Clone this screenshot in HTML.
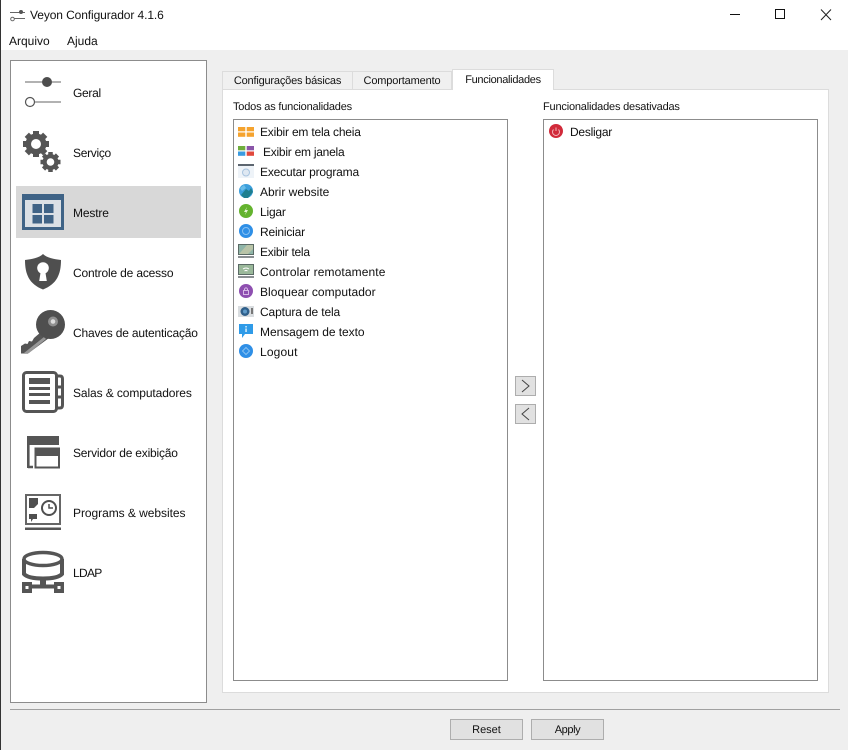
<!DOCTYPE html>
<html><head><meta charset="utf-8">
<style>
html,body{margin:0;padding:0;width:848px;height:750px;overflow:hidden;background:#efefef;}
body{position:relative;font-family:"Liberation Sans",sans-serif;font-size:12px;color:#111;text-rendering:geometricPrecision;}
.a{position:absolute;box-sizing:border-box;}
.t{position:absolute;white-space:nowrap;line-height:16px;height:16px;}
svg{position:absolute;overflow:visible;}
.tab{position:absolute;box-sizing:border-box;background:#f0f0f0;border:1px solid #dcdcdc;border-bottom:none;text-align:center;line-height:18px;top:71px;height:18px;font-size:11px;}
.s{font-size:11px;letter-spacing:-.19px;}
</style></head><body>
<div class="a" style="left:0;top:0;width:848px;height:50px;background:#fff"></div>
<div class="a" style="left:0;top:0;width:1px;height:750px;background:#333"></div>
<svg style="left:10px;top:9px" width="16" height="14" viewBox="0 0 16 14"><path d="M0 3.500H15M4 9.500H15" stroke="#666" stroke-width="1" fill="none"/><circle cx="11" cy="3" r="2" fill="#555"/><circle cx="2.500" cy="10" r="1.800" fill="#fff" stroke="#666"/></svg>
<div class="t" style="left:30px;top:7px;letter-spacing:-.1px">Veyon Configurador 4.1.6</div>
<div class="t" style="left:9px;top:33px">Arquivo</div>
<div class="t" style="left:67px;top:33px">Ajuda</div>
<svg style="left:730px;top:8px" width="100" height="14" viewBox="0 0 100 14"><path d="M0 6.500H10" stroke="#111" fill="none"/><rect x="45.500" y="1.500" width="9" height="9" fill="none" stroke="#111"/><path d="M91 1.500L101 12M101 1.500L91 12" stroke="#222" fill="none"/></svg>

<div class="a" style="left:10px;top:60px;width:197px;height:643px;background:#fff;border:1px solid #8c8c8c"></div>
<div class="a" style="left:16px;top:186px;width:185px;height:52px;background:#d8d8d8"></div>

<svg style="left:22px;top:72px" width="42" height="42" viewBox="0 0 42 42"><path d="M3 10H39M8 30H39" stroke="#666" stroke-width="1" fill="none"/><circle cx="25" cy="10" r="5" fill="#4d4d4d"/><circle cx="8" cy="30" r="4.500" fill="#fff" stroke="#555" stroke-width="1.200"/></svg>
<div class="t" style="left:73px;top:85px;letter-spacing:-.3px">Geral</div>

<svg style="left:22px;top:130px" width="42" height="44" viewBox="0 0 42 44">
<g fill="#555"><circle cx="14" cy="14" r="10.500"/><circle cx="28.500" cy="32" r="8"/>
<g stroke="#555" stroke-width="6"><path d="M14 1V27M1 14H27M4.800 4.800L23.200 23.200M23.200 4.800L4.800 23.200"/></g>
<g stroke="#555" stroke-width="4.500"><path d="M28.500 22V42M18.500 32H38.500M21.500 25L35.500 39M35.500 25L21.500 39"/></g></g>
<circle cx="14" cy="14" r="5" fill="#fff"/><circle cx="28.500" cy="32" r="3.800" fill="#fff"/></svg>
<div class="t" style="left:73px;top:145px;letter-spacing:-.3px">Serviço</div>

<svg style="left:22px;top:194px" width="42" height="36" viewBox="0 0 42 36"><rect width="42" height="36" fill="#3f6386"/><rect x="3" y="6" width="36" height="27" fill="#dbe0e5"/><g fill="#3f6386"><rect x="10.500" y="10" width="9.500" height="9"/><rect x="22" y="10" width="9.500" height="9"/><rect x="10.500" y="21" width="9.500" height="8.500"/><rect x="22" y="21" width="9.500" height="8.500"/></g></svg>
<div class="t" style="left:73px;top:205px;letter-spacing:-.15px">Mestre</div>

<svg style="left:25px;top:254px" width="36" height="36" viewBox="0 0 36 36"><path d="M18 0C14 4 7 5 0 6C0 20 4 30 18 35.500C32 30 36 20 36 6C29 5 22 4 18 0Z" fill="#4f4f4f"/><circle cx="18" cy="14" r="5.800" fill="#fff"/><path d="M15.800 17H20.200L21.800 27H14.200Z" fill="#fff"/></svg>
<div class="t" style="left:73px;top:265px;letter-spacing:-.17px">Controle de acesso</div>

<svg style="left:21px;top:310px" width="44" height="44" viewBox="0 0 44 44"><path d="M0 36L4 33.500L6.500 34L8 31L11 31.500L13 28L20 22L28 28L7 43.500H0Z" fill="#555"/><path d="M3 43L23 27L25 29L8 43Z" fill="#999"/><circle cx="29.500" cy="14.500" r="14.500" fill="#4f4f4f"/><circle cx="32" cy="11.500" r="5" fill="#8f8f8f"/><circle cx="32" cy="11.500" r="2.300" fill="#ddd"/></svg>
<div class="t" style="left:73px;top:325px;letter-spacing:-.18px">Chaves de autenticação</div>

<svg style="left:22px;top:371px" width="42" height="42" viewBox="0 0 42 42"><rect x="1.500" y="1.500" width="33" height="39" rx="3" fill="#fff" stroke="#555" stroke-width="3"/><path d="M34 5H38Q40.500 5 40.500 8V34Q40.500 37 38 37H34M34 16H40M34 26H40" fill="none" stroke="#555" stroke-width="3"/><g fill="#555"><rect x="7" y="7" width="21" height="6"/><rect x="7" y="16" width="21" height="3"/><rect x="7" y="22" width="21" height="3"/><rect x="7" y="29" width="21" height="4"/></g></svg>
<div class="t" style="left:73px;top:385px;letter-spacing:-.1px">Salas &amp; computadores</div>

<svg style="left:26px;top:435px" width="34" height="34" viewBox="0 0 34 34"><path d="M2.300 8V33M2 32H7" stroke="#555" stroke-width="2.600" fill="none"/><rect x="1" y="1" width="32" height="9" fill="#555"/><rect x="9.500" y="13.500" width="23.500" height="19" fill="#fff" stroke="#555" stroke-width="2"/><rect x="9" y="13" width="24" height="8" fill="#555"/></svg>
<div class="t" style="left:73px;top:445px;letter-spacing:-.2px">Servidor de exibição</div>

<svg style="left:25px;top:494px" width="36" height="36" viewBox="0 0 36 36"><rect x="1" y="1" width="34" height="29" fill="#fff" stroke="#666" stroke-width="2"/><rect x="0" y="33.500" width="36" height="2.500" fill="#555"/><path d="M4 4H13V10L9 14H4Z" fill="#4f4f4f"/><path d="M4 20H12V25H8L6 28V25H4Z" fill="#4f4f4f"/><circle cx="24" cy="14" r="7" fill="#fff" stroke="#4f4f4f" stroke-width="2"/><path d="M24 10V14H28" fill="none" stroke="#4f4f4f" stroke-width="1.500"/></svg>
<div class="t" style="left:73px;top:505px;letter-spacing:-.05px">Programs &amp; websites</div>

<svg style="left:22px;top:551px" width="42" height="43" viewBox="0 0 42 43"><path d="M2 8V23Q6 27.500 21 27.500Q36 27.500 40 23V8" fill="#fff" stroke="#555" stroke-width="4"/><ellipse cx="21" cy="8" rx="19" ry="6.500" fill="#fff" stroke="#555" stroke-width="3.500"/><rect x="18" y="27" width="6" height="9" fill="#555"/><rect x="8" y="33.500" width="26" height="4" fill="#555"/><rect x="0" y="31" width="10" height="11" fill="#555"/><rect x="3.500" y="35" width="3" height="3" fill="#fff"/><rect x="32" y="31" width="10" height="11" fill="#555"/><rect x="35.500" y="35" width="3" height="3" fill="#fff"/></svg>
<div class="t" style="left:73px;top:565px;letter-spacing:-.7px">LDAP</div>

<div class="a" style="left:222px;top:89px;width:607px;height:604px;background:#fff;border:1px solid #dcdcdc"></div>
<div class="tab" style="left:222px;width:131px;letter-spacing:-.19px">Configurações básicas</div>
<div class="tab" style="left:353px;width:99px;border-left:none;letter-spacing:-.15px">Comportamento</div>
<div class="a" style="left:452px;top:69px;width:102px;height:21px;background:#fff;border:1px solid #dcdcdc;border-bottom:none;text-align:center;line-height:21px;font-size:11px;letter-spacing:-.3px">Funcionalidades</div>

<div class="t s" style="left:233px;top:99px">Todos as funcionalidades</div>
<div class="t s" style="left:543px;top:99px">Funcionalidades desativadas</div>
<div class="a" style="left:233px;top:119px;width:275px;height:562px;background:#fff;border:1px solid #8c8c8c"></div>
<div class="a" style="left:543px;top:119px;width:275px;height:562px;background:#fff;border:1px solid #8c8c8c"></div>

<svg style="left:238px;top:127px" width="16" height="10" viewBox="0 0 16 10"><g fill="#f5a32e"><rect y="0" width="7.300" height="4.300"/><rect x="8.700" y="0" width="7.300" height="4.300"/><rect y="5.500" width="7.300" height="4.300"/><rect x="8.700" y="5.500" width="7.300" height="4.300"/></g></svg>
<div class="t" style="left:260px;top:124px;letter-spacing:-.2px">Exibir em tela cheia</div>
<svg style="left:238px;top:146px" width="16" height="10" viewBox="0 0 16 10"><rect y="0" width="7.300" height="4.300" fill="#6fae3d"/><rect x="8.700" y="0" width="7.300" height="4.300" fill="#8a55a8"/><rect y="5.500" width="7.300" height="4.300" fill="#3a9be0"/><rect x="8.700" y="5.500" width="7.300" height="4.300" fill="#e0483c"/></svg>
<div class="t" style="left:263px;top:144px;letter-spacing:-.25px">Exibir em janela</div>
<svg style="left:238px;top:164px" width="16" height="14" viewBox="0 0 16 14"><rect width="16" height="14" fill="#eef3f8"/><rect width="16" height="2" fill="#5d6670"/><circle cx="8" cy="8.500" r="3.500" fill="#dfe8f2" stroke="#a9c4df"/></svg>
<div class="t" style="left:260px;top:164px;letter-spacing:-.18px">Executar programa</div>
<svg style="left:239px;top:184px" width="14" height="14" viewBox="0 0 14 14"><circle cx="7" cy="7" r="7" fill="#3d9fdc"/><path d="M2 11L7 5L10 7L12 4L14 8L9 14H5Z" fill="#1f7f8f"/><path d="M1 4L5 1L7 4L3 7Z" fill="#69bde8"/></svg>
<div class="t" style="left:260px;top:184px">Abrir website</div>
<svg style="left:239px;top:204px" width="14" height="14" viewBox="0 0 14 14"><circle cx="7" cy="7" r="7" fill="#64b32e"/><path d="M8 3L5 8H7L6 11L9 6H7Z" fill="#e8f5d8"/></svg>
<div class="t" style="left:260px;top:204px;letter-spacing:-.2px">Ligar</div>
<svg style="left:239px;top:224px" width="14" height="14" viewBox="0 0 14 14"><circle cx="7" cy="7" r="7" fill="#2f8fe6"/><circle cx="7" cy="7" r="3.500" fill="none" stroke="#86c0f2"/></svg>
<div class="t" style="left:260px;top:224px;letter-spacing:-.2px">Reiniciar</div>
<svg style="left:238px;top:244px" width="16" height="14" viewBox="0 0 16 14"><rect width="16" height="11" fill="#5b6b66"/><rect x="1" y="1" width="14" height="9" fill="#8fb5a8"/><path d="M1 10L9 1H15V5L10 10Z" fill="#b9c4a8"/><rect x="0" y="12" width="16" height="2" fill="#8a8f92"/></svg>
<div class="t" style="left:260px;top:244px;letter-spacing:-.27px">Exibir tela</div>
<svg style="left:238px;top:264px" width="16" height="14" viewBox="0 0 16 14"><rect width="16" height="11" fill="#5b6b66"/><rect x="1" y="1" width="14" height="9" fill="#9ab89a"/><path d="M5 5Q8 3 11 5M6.500 7Q8 6 9.500 7" stroke="#fff" fill="none"/><rect x="0" y="12" width="16" height="2" fill="#8a8f92"/></svg>
<div class="t" style="left:260px;top:264px;letter-spacing:.1px">Controlar remotamente</div>
<svg style="left:239px;top:284px" width="14" height="14" viewBox="0 0 14 14"><circle cx="7" cy="7" r="7" fill="#8e4fb0"/><rect x="4.500" y="6.500" width="5" height="4" fill="none" stroke="#d7b9e6"/><path d="M5.500 6.500V5Q7 2.500 8.500 5V6.500" fill="none" stroke="#d7b9e6"/></svg>
<div class="t" style="left:260px;top:284px;letter-spacing:.05px">Bloquear computador</div>
<svg style="left:238px;top:306px" width="16" height="11" viewBox="0 0 16 11"><rect width="16" height="11" fill="#d9dde0"/><circle cx="7" cy="5.500" r="4.500" fill="#2f5f8a"/><circle cx="7" cy="5.500" r="2" fill="#5f9ac8"/><rect x="13" y="2" width="2" height="6" fill="#777"/></svg>
<div class="t" style="left:260px;top:304px;letter-spacing:-.13px">Captura de tela</div>
<svg style="left:239px;top:324px" width="14" height="14" viewBox="0 0 14 14"><path d="M0 0H14V10H6L3 14V10H0Z" fill="#2f9be8"/><rect x="6.300" y="2" width="1.500" height="1.500" fill="#d8eefc"/><rect x="6.300" y="4.500" width="1.500" height="3.500" fill="#d8eefc"/></svg>
<div class="t" style="left:260px;top:324px;letter-spacing:-.05px">Mensagem de texto</div>
<svg style="left:239px;top:344px" width="14" height="14" viewBox="0 0 14 14"><circle cx="7" cy="7" r="7" fill="#2f8fe6"/><path d="M7 3.500L10.500 7L7 10.500L3.500 7Z" fill="none" stroke="#86c0f2"/></svg>
<div class="t" style="left:260px;top:344px;letter-spacing:.15px">Logout</div>

<svg style="left:549px;top:124px" width="14" height="14" viewBox="0 0 14 14"><circle cx="7" cy="7" r="7" fill="#d12a3a"/><path d="M4.500 5.500A3.500 3.500 0 1 0 9.500 5.500M7 3.500V7" fill="none" stroke="#f3b5bb"/></svg>
<div class="t" style="left:570px;top:124px;letter-spacing:-.25px">Desligar</div>

<div class="a" style="left:515px;top:376px;width:21px;height:20px;background:#e1e1e1;border:1px solid #adadad"></div>
<div class="a" style="left:515px;top:404px;width:21px;height:20px;background:#e1e1e1;border:1px solid #adadad"></div>
<svg style="left:515px;top:376px" width="21" height="48" viewBox="0 0 21 48"><path d="M7 4L14 10L7 16M14 32L7 38L14 44" fill="none" stroke="#444"/></svg>

<div class="a" style="left:10px;top:709px;width:830px;height:1px;background:#a0a0a0"></div>
<div class="a" style="left:450px;top:719px;width:73px;height:21px;background:#e1e1e1;border:1px solid #adadad;text-align:center;line-height:20px;font-size:11px">Reset</div>
<div class="a" style="left:531px;top:719px;width:73px;height:21px;background:#e1e1e1;border:1px solid #adadad;text-align:center;line-height:20px;font-size:11px;letter-spacing:-.4px">Apply</div>
</body></html>
